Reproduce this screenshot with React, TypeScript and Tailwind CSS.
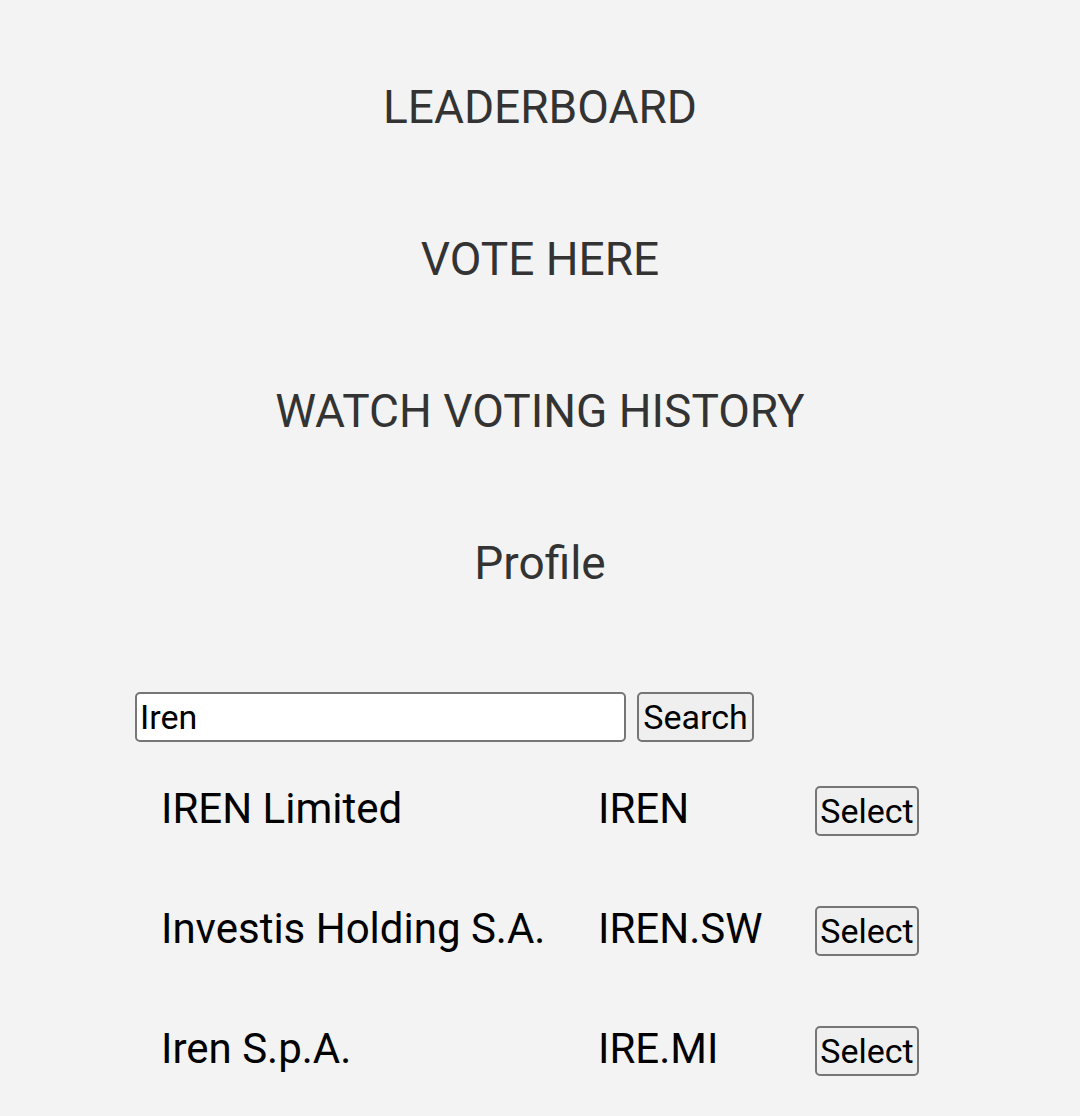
const results = [
  { name: "IREN Limited", symbol: "IREN" },
  { name: "Investis Holding S.A.", symbol: "IREN.SW" },
  { name: "Iren S.p.A.", symbol: "IRE.MI" },
];

const navItems = ["LEADERBOARD", "VOTE HERE", "WATCH VOTING HISTORY", "Profile"];

export default function App() {
  return (
    <main
      className="min-h-screen overflow-hidden bg-[#f3f3f3] text-black"
      style={{ fontFamily: "Roboto, 'Noto Sans', sans-serif" }}
    >
      <nav className="flex flex-col items-center pt-[76px]">
        {navItems.map((item) => (
          <div
            key={item}
            className="flex h-[152px] items-start justify-center text-[46px] leading-[62px] text-[#333333]"
          >
            {item}
          </div>
        ))}
      </nav>

      <section className="mt-[8px] pl-[135px]">
        <form className="flex items-center gap-[11px]" onSubmit={(e) => e.preventDefault()}>
          <input
            defaultValue="Iren"
            className="box-border h-[50px] w-[491px] rounded-[5px] border-2 border-[#767676] bg-white px-[3px] text-[34px] text-black outline-none"
          />
          <button
            type="submit"
            className="box-border h-[50px] w-[117px] rounded-[5px] border-2 border-[#767676] bg-[#efefef] text-[34px] leading-none text-black"
          >
            Search
          </button>
        </form>

        <div className="mt-[30px] flex flex-col pl-[26px]">
          {results.map((r) => (
            <div key={r.symbol} className="flex h-[120px] items-start">
              <div className="w-[437px] pt-[12px] text-[42px] leading-[50px]">{r.name}</div>
              <div className="w-[217px] pt-[12px] text-[42px] leading-[50px]">{r.symbol}</div>
              <button className="mt-[14px] box-border h-[50px] w-[104px] rounded-[5px] border-2 border-[#767676] bg-[#efefef] text-[34px] leading-none text-black">
                Select
              </button>
            </div>
          ))}
        </div>
      </section>
    </main>
  );
}
